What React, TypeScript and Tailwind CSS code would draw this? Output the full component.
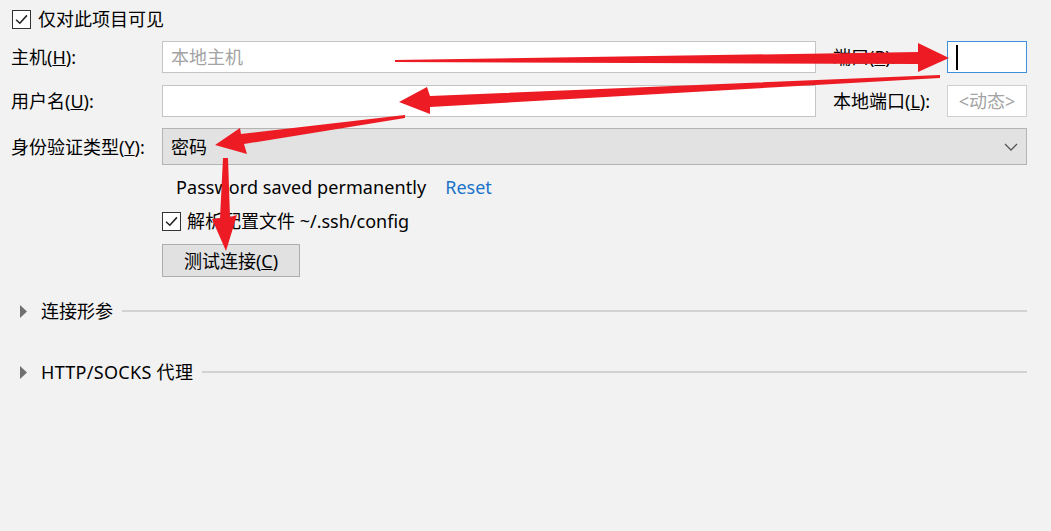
import React from "react";

function Check({ className }: { className: string }) {
  return (
    <div className={"flex items-center justify-center border border-[#333333] bg-white " + className}>
      <svg viewBox="0 0 16 16" className="h-[15px] w-[15px]">
        <path d="M2.2 8.2 L6.2 12 L13.8 3.6" fill="none" stroke="#222222" strokeWidth="1.6" />
      </svg>
    </div>
  );
}

function Tri() {
  return (
    <svg width="8" height="13" viewBox="0 0 8 13" className="shrink-0">
      <polygon points="0,0 7,6.5 0,13" fill="#707070" />
    </svg>
  );
}

export default function App() {
  return (
    <div className="relative h-[531px] w-[1051px] overflow-hidden bg-[#f2f2f2] font-['Noto_Sans','Noto_Sans_CJK_SC',sans-serif] text-[18px] leading-none text-black">
      <div className="flex flex-col pl-[11px] pr-[24px] pt-[9px]">
        {/* visible checkbox */}
        <div className="flex h-[20px] items-center">
          <Check className="ml-[1px] h-[19px] w-[19px]" />
          <span className="ml-[7px]">仅对此项目可见</span>
        </div>

        {/* host row */}
        <div className="mt-[12px] flex h-[32px] items-center">
          <span className="w-[151px] shrink-0">
            主机(<u>H</u>):
          </span>
          <div className="flex h-full w-[654px] items-center border border-[#c4c4c4] bg-white pl-[8px] text-[#a3a3a3]">
            本地主机
          </div>
          <span className="ml-[17px] w-[114px] shrink-0">
            端口(<u>P</u>):
          </span>
          <div className="flex h-full w-[80px] items-center border border-[#3d8fdc] bg-white pl-[8px]">
            <div className="h-[25px] w-[2px] bg-black" />
          </div>
        </div>

        {/* user row */}
        <div className="mt-[12px] flex h-[32px] items-center">
          <span className="w-[151px] shrink-0">
            用户名(<u>U</u>):
          </span>
          <div className="h-full w-[654px] border border-[#c4c4c4] bg-white" />
          <span className="ml-[17px] w-[114px] shrink-0">
            本地端口(<u>L</u>):
          </span>
          <div className="flex h-full w-[80px] items-center justify-center border border-[#cfcfcf] bg-white text-[#a3a3a3]">
            &lt;动态&gt;
          </div>
        </div>

        {/* auth row */}
        <div className="mt-[11px] flex h-[37px] items-center">
          <span className="w-[151px] shrink-0">
            身份验证类型(<u>Y</u>):
          </span>
          <div className="flex h-full flex-1 items-center justify-between border border-[#b4b4b4] bg-[#e2e2e2] pl-[8px] pr-[8px]">
            <span>密码</span>
            <svg width="14" height="8" viewBox="0 0 14 8">
              <polyline points="1,1 7,7 13,1" fill="none" stroke="#555555" strokeWidth="1.3" />
            </svg>
          </div>
        </div>

        {/* password saved */}
        <div className="mt-[12px] flex h-[20px] items-center pl-[165px]">
          <span className="tracking-[0.08px]">Password saved permanently</span>
          <span className="ml-[19px] text-[#1a73c9]">Reset</span>
        </div>

        {/* parse config */}
        <div className="mt-[14px] flex h-[20px] items-center pl-[151px]">
          <Check className="h-[19px] w-[19px]" />
          <span className="ml-[6px]">解析配置文件 ~/.ssh/config</span>
        </div>

        {/* test button */}
        <div className="mt-[13px] pl-[151px]">
          <div className="flex h-[33px] w-[138px] items-center justify-center border border-[#adadad] bg-[#e1e1e1]">
            测试连接(<u>C</u>)
          </div>
        </div>

        {/* sections */}
        <div className="mt-[24px] flex h-[20px] items-center pl-[9px]">
          <Tri />
          <span className="ml-[13px]">连接形参</span>
          <div className="ml-[9px] h-[2px] flex-1 bg-[#d2d2d2]" />
        </div>
        <div className="mt-[41px] flex h-[20px] items-center pl-[9px]">
          <Tri />
          <span className="ml-[13px] tracking-[0.3px]">HTTP/SOCKS 代理</span>
          <div className="ml-[9px] h-[2px] flex-1 bg-[#d2d2d2]" />
        </div>
      </div>

      {/* annotation arrows */}
      <svg className="pointer-events-none absolute left-0 top-0" width="1051" height="531" viewBox="0 0 1051 531">
        <g fill="#ed1c24">
          <polygon points="395,60 918,52 918,43 949,58 918,72 918,64 395,62" />
          <polygon points="940,75 430,96 427,87 399,102 430,114 430,107 940,78" />
          <polygon points="405,115 241,134 240,128 215,145 247,154 244,144 405,118" />
          <polygon points="223,158 220,218 212,219 226,251 237,215 230,217 228,158" />
        </g>
      </svg>
    </div>
  );
}
